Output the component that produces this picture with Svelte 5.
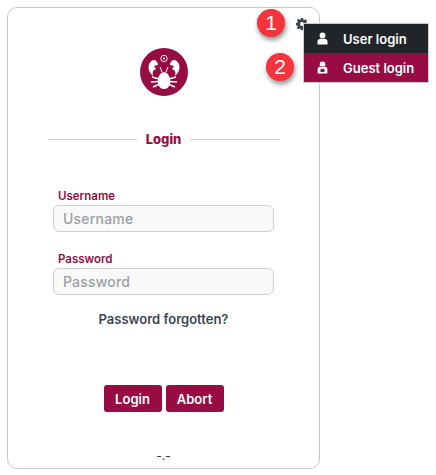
<script>
  const crabLegs = [
    "M19 31 L12 29", "M19 33.5 L11 34", "M20 36 L13 39", "M29 31 L36 29", "M29 33.5 L37 34", "M28 36 L35 39"
  ];
</script>

<div class="stage">
  <main class="card">
    <div class="logo">
      <svg viewBox="0 0 48 48" width="48" height="48" aria-hidden="true">
        <circle cx="24" cy="24" r="24" fill="#960c43" />
        <circle cx="24" cy="10.5" r="3.2" fill="none" stroke="#fff" stroke-width="0.9" />
        <circle cx="24" cy="10.5" r="1" fill="#fff" />
        <path d="M13 12 C7 15 7 23 13 28 C12 24 13 22 16 21 L14 18 L18 17 C18 14 16 12 13 12Z" fill="#fff" />
        <path d="M35 12 C41 15 41 23 35 28 C36 24 35 22 32 21 L34 18 L30 17 C30 14 32 12 35 12Z" fill="#fff" />
        <path d="M24 24 C19 25 17 31 18 36 C19 39 21 41 24 41 C27 41 29 39 30 36 C31 31 29 25 24 24Z" fill="#fff" />
        <path d="M22 24 L20 19 M26 24 L28 19" stroke="#fff" stroke-width="1" fill="none" />
        {#each crabLegs as d}
          <path {d} stroke="#fff" stroke-width="1.6" fill="none" />
        {/each}
      </svg>
    </div>

    <div class="divider"><span>Login</span></div>

    <form class="form">
      <div class="field">
        <label for="u">Username</label>
        <input id="u" placeholder="Username" />
      </div>
      <div class="field">
        <label for="p">Password</label>
        <input id="p" placeholder="Password" />
      </div>
    </form>

    <p class="forgot">Password forgotten?</p>

    <div class="actions">
      <button type="button">Login</button>
      <button type="button">Abort</button>
    </div>

    <footer class="foot">-.-</footer>

    <svg class="gear" viewBox="0 0 16 16" width="12" height="12" aria-hidden="true">
      <path fill="#3d4650" d="M6.6 0h2.8l.4 2.1 1.3.6 1.8-1.2 2 2-1.2 1.8.6 1.3 2.1.4v2.8l-2.1.4-.6 1.3 1.2 1.8-2 2-1.8-1.2-1.3.6-.4 2.1H6.6l-.4-2.1-1.3-.6-1.8 1.2-2-2 1.2-1.8-.6-1.3L-.4 9.4V6.6l2.1-.4.6-1.3L1.1 3.1l2-2 1.8 1.2 1.3-.6zM8 5.4A2.6 2.6 0 1 0 8 10.6 2.6 2.6 0 0 0 8 5.4z" fill-rule="evenodd" />
    </svg>
  </main>

  <div class="menu">
    <div class="item dark">
      <svg viewBox="0 0 12 14" width="11" height="13" aria-hidden="true">
        <circle cx="6" cy="3.6" r="3.2" fill="#fff" />
        <path d="M0.5 13.5 V10.5 C0.5 8.2 2.5 7.3 4 7.3 H8 C9.5 7.3 11.5 8.2 11.5 10.5 V13.5Z" fill="#fff" />
      </svg>
      <span>User login</span>
    </div>
    <div class="item wine">
      <svg viewBox="0 0 12 14" width="11" height="13" aria-hidden="true">
        <path d="M3 5.5 V3 C3 1.2 4.5 0.5 6 0.5 C7.5 0.5 9 1.2 9 3 V5.5Z" fill="#fff" />
        <path d="M0.7 13.5 V9 C0.7 7 2 6.2 3.5 6.2 H8.5 C10 6.2 11.3 7 11.3 9 V13.5Z" fill="#fff" />
        <rect x="3.8" y="8.5" width="4.4" height="3.4" fill="#960c43" />
      </svg>
      <span>Guest login</span>
    </div>
  </div>

  <div class="badge one">1</div>
  <div class="badge two">2</div>
</div>

<style>
  :global(body) {
    margin: 0;
    background: #fff;
    font-family: "Inter", "Open Sans", sans-serif;
  }

  .stage {
    position: relative;
    width: 436px;
    height: 475px;
    padding: 7px 0 0 7px;
    box-sizing: border-box;
    overflow: hidden;
  }

  .card {
    position: relative;
    box-sizing: border-box;
    width: 313px;
    height: 462px;
    border: 1px solid #c8c8c8;
    border-radius: 10px;
    display: flex;
    flex-direction: column;
    align-items: center;
    padding-top: 40px;
  }

  .logo {
    height: 48px;
    line-height: 0;
  }

  .divider {
    width: 232px;
    margin-top: 34px;
    display: flex;
    align-items: center;
    gap: 9px;
    color: #960c43;
    font-size: 13px;
    font-weight: 800;
    height: 18px;
  }

  .divider::before,
  .divider::after {
    content: "";
    flex: 1;
    height: 1px;
    background: #d0d0d0;
  }

  .form {
    width: 221px;
    margin-top: 39px;
    display: flex;
    flex-direction: column;
    gap: 18px;
  }

  .field {
    display: flex;
    flex-direction: column;
  }

  label {
    color: #960c43;
    font-size: 11.5px;
    font-weight: 600;
    line-height: 18px;
    padding-left: 5px;
  }

  input {
    box-sizing: border-box;
    width: 221px;
    height: 27px;
    border: 1px solid #cfcfcf;
    border-radius: 6px;
    background: #f9f9f9;
    padding: 0 9px;
    font: 500 14px "Inter", sans-serif;
    letter-spacing: 0.2px;
    outline: none;
  }

  input::placeholder {
    color: #9a9fa5;
    opacity: 1;
  }

  .forgot {
    margin: 14px 0 0;
    color: #3d4650;
    font-size: 13px;
    font-weight: 600;
    line-height: 20px;
  }

  .actions {
    margin-top: 56px;
    display: flex;
    gap: 4px;
  }

  button {
    box-sizing: border-box;
    width: 58px;
    height: 27px;
    padding: 0;
    border: 0;
    border-radius: 3px;
    background: #960c43;
    color: #fff;
    font: 600 13px "Inter", sans-serif;
  }

  .foot {
    margin-top: auto;
    margin-bottom: 4px;
    font-size: 12px;
    line-height: 16px;
    color: #333;
  }

  .gear {
    position: absolute;
    top: 10px;
    right: 11px;
  }

  .menu {
    position: absolute;
    left: 303px;
    top: 23px;
    width: 124px;
    border: 1px solid #ccc;
    box-sizing: content-box;
  }

  .item {
    height: 29px;
    display: flex;
    align-items: center;
    gap: 15px;
    padding-left: 13px;
    color: #fff;
    font-size: 13px;
    font-weight: 600;
  }

  .dark { background: #212529; }
  .wine { background: #960c43; }

  .badge {
    position: absolute;
    width: 28px;
    height: 28px;
    border-radius: 50%;
    background: #f4343c;
    color: #fff;
    display: flex;
    align-items: center;
    justify-content: center;
    font: 400 21px "Liberation Sans", sans-serif;
    box-shadow: 1px 3px 5px rgba(0, 0, 0, 0.45);
  }

  .one { left: 257px; top: 9px; }
  .two { left: 266px; top: 53px; }
</style>
